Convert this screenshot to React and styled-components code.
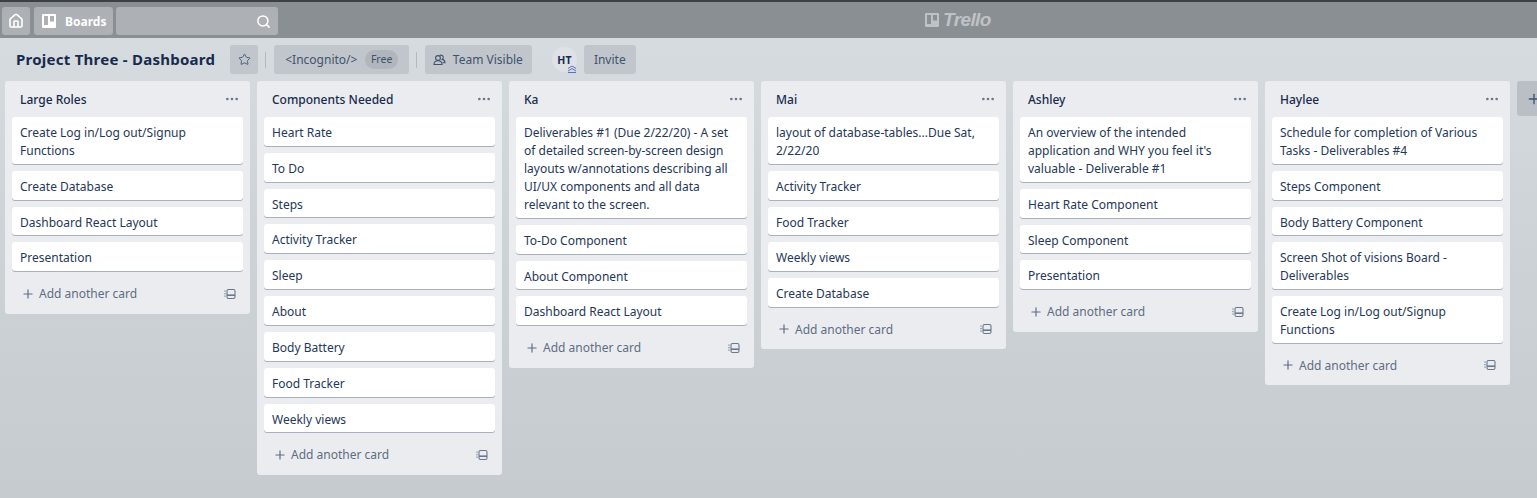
import React from 'react';
import styled, { createGlobalStyle } from 'styled-components';
import { Star, Search, Plus, Ellipsis, House } from 'lucide-react';

const GlobalStyle = createGlobalStyle`
  html, body {
    margin: 0;
    height: 100%;
    overflow: hidden;
  }
  body {
    font-family: "Noto Sans", "Open Sans", sans-serif;
    color: #172b4d;
  }
`;

const Page = styled.div`
  width: 1537px;
  height: 498px;
  overflow: hidden;
  display: flex;
  flex-direction: column;
  background: linear-gradient(180deg, #d8dde2 0%, #ced3d7 45%, #c5cbce 100%);
`;

const TopBar = styled.header`
  position: relative;
  flex: none;
  height: 34px;
  border-top: 2px solid #3d4145;
  background: #8a8f94;
  display: flex;
  align-items: center;
  gap: 3px;
  padding: 2px 0 0 2px;
  box-sizing: content-box;
`;

const TopButton = styled.div`
  height: 28px;
  width: ${({ $w }) => $w}px;
  margin-left: ${({ $ml }) => $ml || 0}px;
  box-sizing: border-box;
  border-radius: 3px;
  background: #adb1b5;
  color: #fff;
  display: flex;
  align-items: center;
  justify-content: ${({ $justify }) => $justify || 'center'};
  gap: 8px;
  padding: ${({ $pad }) => $pad || '0'};
  font-size: 12px;
  font-weight: 700;
`;

const Logo = styled.div`
  position: absolute;
  left: 924px;
  top: 6px;
  display: flex;
  align-items: center;
  gap: 3px;
  color: #bfc2c5;
  font-family: "Liberation Sans", sans-serif;
  font-style: italic;
  font-weight: 700;
  font-size: 19px;
  letter-spacing: -0.6px;
  line-height: 24px;
`;

const BoardBar = styled.div`
  flex: none;
  height: 43px;
  display: flex;
  align-items: center;
  padding: 0 0 0 16px;
  box-sizing: border-box;
`;

const BoardTitle = styled.h1`
  margin: -2px 15px 0 0;
  font-size: 15px;
  font-weight: 700;
  line-height: 20px;
  letter-spacing: 0.25px;
  color: #172b4d;
`;

const BarButton = styled.div`
  height: 29px;
  box-sizing: border-box;
  padding: ${({ $pad }) => $pad || '0 11px'};
  width: ${({ $w }) => ($w ? `${$w}px` : 'auto')};
  border-radius: 3px;
  background: #c0c6cb;
  color: #42526e;
  display: flex;
  align-items: center;
  justify-content: ${({ $center }) => ($center ? 'center' : 'flex-start')};
  gap: ${({ $gap }) => $gap || 8}px;
  font-size: 12px;
  white-space: nowrap;
`;

const Divider = styled.span`
  width: 1px;
  height: 16px;
  margin: 0 8px 0 7px;
  background: #b3b9be;
`;

const FreeTag = styled.span`
  height: 19px;
  padding: 0 5.5px;
  border-radius: 10px;
  background: #b0b6bb;
  font-size: 10.5px;
  line-height: 19px;
  color: #42526e;
`;

const Avatar = styled.div`
  position: relative;
  flex: none;
  width: 25px;
  height: 25px;
  margin: 0 7px 0 20px;
  border-radius: 50%;
  background: #dfe1e6;
  display: flex;
  align-items: center;
  justify-content: center;
  font-size: 10.5px;
  font-weight: 700;
  color: #172b4d;
`;

const AvatarBadge = styled.svg`
  position: absolute;
  right: 0;
  bottom: -1px;
`;

const Board = styled.main`
  display: flex;
  align-items: flex-start;
  gap: 7px;
  padding-left: 5px;
  width: 1700px;
`;

const ListBox = styled.section`
  flex: none;
  width: 245px;
  box-sizing: border-box;
  padding: 0 7px;
  border-radius: 3px;
  background: #ebecf0;
`;

const ListHead = styled.div`
  height: 36px;
  display: flex;
  align-items: center;
  justify-content: space-between;
  padding: 0 3px 0 8px;
  font-size: 12px;
  font-weight: 500;
  color: #172b4d;
`;

const More = styled(Ellipsis)`
  color: #6b778c;
`;

const Cards = styled.div`
  display: flex;
  flex-direction: column;
  gap: 7px;
`;

const Card = styled.div`
  box-sizing: border-box;
  padding: 6.9px 8px 3.95px;
  border-radius: 3px;
  background: #fff;
  box-shadow: 0 1px 0 #a9b1c0;
  font-size: 12px;
  line-height: 18px;
  color: #253858;
`;

const ListFoot = styled.div`
  height: 42.3px;
  box-sizing: border-box;
  display: flex;
  align-items: center;
  justify-content: space-between;
  padding: 2.3px 7px 0 9px;
  font-size: 12px;
  color: #5e6c84;
`;

const AddCard = styled.span`
  display: flex;
  align-items: center;
  gap: 4px;
`;

const Extra = styled.div`
  flex: none;
  width: 245px;
  height: 35px;
  padding-left: 9px;
  box-sizing: border-box;
  border-radius: 3px;
  background: #b9bfc4;
  color: #42526e;
  display: flex;
  align-items: center;
`;

const TrelloMark = ({ size, color }) => (
  <svg width={size} height={size} viewBox="0 0 16 16">
    <path
      fill={color}
      fillRule="evenodd"
      d="M2 1h12a1 1 0 0 1 1 1v12a1 1 0 0 1-1 1H2a1 1 0 0 1-1-1V2a1 1 0 0 1 1-1zm1 2v9h4V3H3zm6 0v5.5h4V3H9z"
    />
  </svg>
);

const TemplateIcon = () => (
  <svg width="12" height="12" viewBox="0 0 12 12" fill="none" stroke="#6b778c">
    <rect x="3" y="1.5" width="8" height="9" rx="1.5" strokeWidth="1.1" />
    <path d="M3 7.2h8" strokeWidth="1.6" />
    <path d="M1 2.5v1.2M1 5v1.2M1 7.5v1.2" strokeWidth="1.1" />
  </svg>
);

const TeamIcon = () => (
  <svg width="13" height="13" viewBox="0 0 13 13" fill="none" stroke="#42526e" strokeWidth="1.1">
    <circle cx="5" cy="5" r="2.4" />
    <path d="M1 11.5c0-2.4 1.6-3.7 4-3.7s4 1.3 4 3.7H1z" />
    <path d="M6.6 2.6a2.3 2.3 0 0 1 3.6 2.4c-.2.7-.6 1.1-1 1.4 1.8.4 2.8 1.6 2.8 3.4h-2.6" />
  </svg>
);

const lists = [
  { name: 'Large Roles', cards: ['Create Log in/Log out/Signup Functions', 'Create Database', 'Dashboard React Layout', 'Presentation'] },
  {
    name: 'Components Needed',
    cards: ['Heart Rate', 'To Do', 'Steps', 'Activity Tracker', 'Sleep', 'About', 'Body Battery', 'Food Tracker', 'Weekly views'],
  },
  {
    name: 'Ka',
    cards: [
      'Deliverables #1 (Due 2/22/20) - A set of detailed screen-by-screen design layouts w/annotations describing all UI/UX components and all data relevant to the screen.',
      'To-Do Component',
      'About Component',
      'Dashboard React Layout',
    ],
  },
  {
    name: 'Mai',
    cards: ['layout of database-tables...Due Sat, 2/22/20', 'Activity Tracker', 'Food Tracker', 'Weekly views', 'Create Database'],
  },
  {
    name: 'Ashley',
    cards: [
      "An overview of the intended application and WHY you feel it's valuable - Deliverable #1",
      'Heart Rate Component',
      'Sleep Component',
      'Presentation',
    ],
  },
  {
    name: 'Haylee',
    cards: [
      'Schedule for completion of Various Tasks - Deliverables #4',
      'Steps Component',
      'Body Battery Component',
      'Screen Shot of visions Board - Deliverables',
      'Create Log in/Log out/Signup Functions',
    ],
  },
];

const App = () => (
  <Page>
    <GlobalStyle />
    <TopBar>
      <TopButton $w={28}>
        <House size={16} strokeWidth={2.4} />
      </TopButton>
      <TopButton $w={79} $ml={1} $justify="flex-start" $pad="0 0 0 7px">
        <TrelloMark size={16} color="#fff" />
        Boards
      </TopButton>
      <TopButton $w={162} $justify="flex-end" $pad="0 7px 0 0">
        <Search size={15} strokeWidth={2.4} />
      </TopButton>
      <Logo>
        <TrelloMark size={16} color="#bfc2c5" />
        Trello
      </Logo>
    </TopBar>
    <BoardBar>
      <BoardTitle>Project Three - Dashboard</BoardTitle>
      <BarButton $w={28} $pad="0" $center>
        <Star size={13} strokeWidth={1.6} />
      </BarButton>
      <Divider />
      <BarButton>
        {'<Incognito/>'}
        <FreeTag>Free</FreeTag>
      </BarButton>
      <Divider />
      <BarButton $pad="0 9px 0 8px" $gap={7}>
        <TeamIcon />
        Team Visible
      </BarButton>
      <Avatar>
        HT
        <AvatarBadge width="10" height="8" viewBox="0 0 10 8" fill="none" stroke="#5a6fc0" strokeWidth="1">
          <path d="M1 3.5 5 1l4 2.5M1 6 5 3.5 9 6M1 7.5h8" />
        </AvatarBadge>
      </Avatar>
      <BarButton $pad="0 10px">Invite</BarButton>
    </BoardBar>
    <Board>
      {lists.map((list) => (
        <ListBox key={list.name}>
          <ListHead>
            {list.name}
            <More size={16} />
          </ListHead>
          <Cards>
            {list.cards.map((card) => (
              <Card key={card}>{card}</Card>
            ))}
          </Cards>
          <ListFoot>
            <AddCard>
              <Plus size={14} />
              Add another card
            </AddCard>
            <TemplateIcon />
          </ListFoot>
        </ListBox>
      ))}
      <Extra>
        <Plus size={16} />
      </Extra>
    </Board>
  </Page>
);

export default App;
